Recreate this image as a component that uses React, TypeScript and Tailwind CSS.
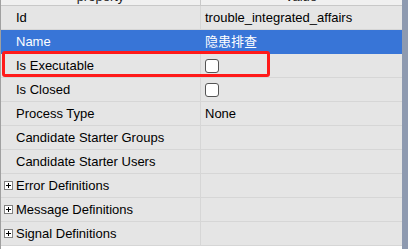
import React from "react";

const font = { fontFamily: '"Liberation Sans", "Noto Sans CJK SC", sans-serif' };

function Plus() {
  return (
    <svg width="9" height="9" viewBox="0 0 9 9" className="mr-[3px] shrink-0">
      <rect x="0.5" y="0.5" width="8" height="8" fill="#fff" stroke="#808080" />
      <path d="M2 4.5h5M4.5 2v5" stroke="#000" strokeWidth="1" />
    </svg>
  );
}

function Check() {
  return <div className="w-[14px] h-[14px] rounded-[3px] border border-[#555] bg-white" />;
}

type Row = { k: string; v?: React.ReactNode; sel?: boolean; plus?: boolean };

const rows: Row[] = [
  { k: "Id", v: "trouble_integrated_affairs" },
  { k: "Name", v: "隐患排查", sel: true },
  { k: "Is Executable", v: <Check /> },
  { k: "Is Closed", v: <Check /> },
  { k: "Process Type", v: "None" },
  { k: "Candidate Starter Groups" },
  { k: "Candidate Starter Users" },
  { k: "Error Definitions", plus: true },
  { k: "Message Definitions", plus: true },
  { k: "Signal Definitions", plus: true },
];

export default function App() {
  return (
    <div className="w-[408px] h-[249px] bg-white overflow-hidden relative flex text-[13px]" style={font}>
      <div className="w-[402px] flex flex-col border-l border-[#a0a0a0]">
        <div className="flex h-[24px] -mt-[18px] bg-[#f0f0f0] border-b border-[#c8c8c8] text-[#222] shrink-0 leading-[15px]">
          <div className="w-[200px] flex items-end justify-center pb-[1px] border-r border-[#c8c8c8]">property</div>
          <div className="flex-1 flex items-end justify-center pb-[1px]">value</div>
        </div>
        {rows.map((r) => (
          <div
            key={r.k}
            className={`flex h-[24px] shrink-0 border-b ${r.sel ? "bg-[#3875d7] text-white border-[#3875d7]" : "bg-[#e5e5e5] text-black border-[#d6d6d6]"}`}
          >
            <div className={`w-[200px] flex items-center ${r.plus ? "pl-[3px]" : "pl-[15px]"} border-r ${r.sel ? "border-[#3875d7]" : "border-[#d6d6d6]"}`}>
              {r.plus && <Plus />}
              <span>{r.k}</span>
            </div>
            <div className="flex-1 flex items-center pl-[4px] pr-[1px]">{r.v}</div>
          </div>
        ))}
      </div>
      <div className="w-[6px] bg-[#8e9ab0]" />
      <div className="absolute left-[2px] top-[51px] w-[268px] h-[26px] border-[3px] border-[#ff1a1a] rounded-[3px] pointer-events-none" />
    </div>
  );
}
